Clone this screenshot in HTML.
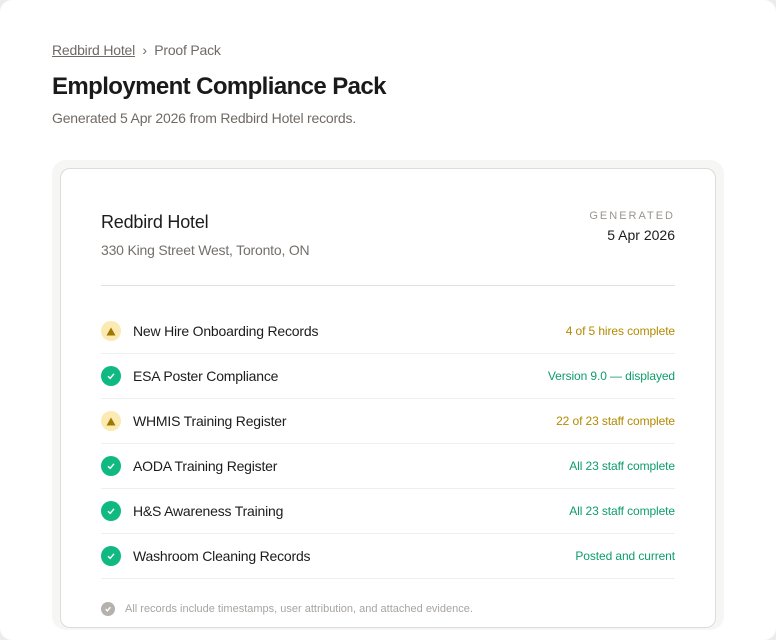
<!DOCTYPE html>
<html><head><meta charset="utf-8"><style>
*{box-sizing:border-box;margin:0;padding:0}
html,body{width:776px;height:612px;overflow:hidden;background:#ececec}
body{font-family:"Liberation Sans",sans-serif;color:#1c1c1c}
.page{position:absolute;left:0;top:0;width:776px;height:640px;background:#fff;border-radius:12px}
.crumb{position:absolute;left:52px;top:42px;font-size:14px;color:#6f6a66;letter-spacing:-0.2px}
.crumb u{color:#6f6a66;text-decoration:underline}
h1{position:absolute;left:52px;top:73px;font-size:24px;font-weight:600;letter-spacing:-0.6px;color:#1a1a1a}
.sub{position:absolute;left:52px;top:110px;font-size:14px;color:#6f6a66;letter-spacing:-0.2px}
.wrap{position:absolute;left:52px;top:160px;width:672px;height:470px;background:#f6f6f5;border-radius:14px}
.card{position:absolute;left:60px;top:168px;width:656px;height:460px;background:#fff;border:1px solid #dcdcda;border-radius:10px}
.name{position:absolute;left:40px;top:43px;font-size:18px;font-weight:500;letter-spacing:-0.2px}
.addr{position:absolute;left:40px;top:73px;font-size:14px;color:#746f6b;letter-spacing:-0.2px}
.gl{position:absolute;right:40px;top:41px;font-size:11px;letter-spacing:2px;color:#9a9591;text-align:right}
.gd{position:absolute;right:40px;top:58px;font-size:14px;text-align:right}
.hr{position:absolute;left:40px;right:40px;top:116px;border-top:1px solid #e2e2e0}
.row{position:absolute;left:40px;right:40px;height:45px;border-bottom:1px solid #efefed;display:flex;align-items:center}
.ic{width:20px;height:20px;border-radius:50%;display:flex;align-items:center;justify-content:center;margin-right:12px}
.ok{background:#10b981}.wn{background:#fbeab2}
.lab{font-size:14px;flex:1;letter-spacing:-0.2px}
.st{font-size:12px;letter-spacing:-0.1px}
.g{color:#0d9e6a}.y{color:#b38a00}
.foot{position:absolute;left:40px;top:433px;font-size:11px;color:#a8a4a0;display:flex;align-items:center}
</style></head><body>
<div class="page">
<div class="crumb"><u>Redbird Hotel</u> &nbsp;›&nbsp; Proof Pack</div>
<h1>Employment Compliance Pack</h1>
<div class="sub">Generated 5 Apr 2026 from Redbird Hotel records.</div>
<div class="wrap"></div>
<div class="card">
<div class="name">Redbird Hotel</div>
<div class="addr">330 King Street West, Toronto, ON</div>
<div class="gl">GENERATED</div>
<div class="gd">5 Apr 2026</div>
<div class="hr"></div>
<div class="row" style="top:140px"><div class="ic wn"><svg width="10" height="9" viewBox="0 0 10 9"><path d="M5 0.5L9.5 8.5H0.5Z" fill="#a07800"/></svg></div><div class="lab">New Hire Onboarding Records</div><div class="st y">4 of 5 hires complete</div></div>
<div class="row" style="top:185px"><div class="ic ok"><svg width="10" height="10" viewBox="0 0 10 10"><path d="M2 5.2L4.2 7.3L8 2.8" stroke="#fff" stroke-width="1.4" fill="none"/></svg></div><div class="lab">ESA Poster Compliance</div><div class="st g">Version 9.0 — displayed</div></div>
<div class="row" style="top:230px"><div class="ic wn"><svg width="10" height="9" viewBox="0 0 10 9"><path d="M5 0.5L9.5 8.5H0.5Z" fill="#a07800"/></svg></div><div class="lab">WHMIS Training Register</div><div class="st y">22 of 23 staff complete</div></div>
<div class="row" style="top:275px"><div class="ic ok"><svg width="10" height="10" viewBox="0 0 10 10"><path d="M2 5.2L4.2 7.3L8 2.8" stroke="#fff" stroke-width="1.4" fill="none"/></svg></div><div class="lab">AODA Training Register</div><div class="st g">All 23 staff complete</div></div>
<div class="row" style="top:320px"><div class="ic ok"><svg width="10" height="10" viewBox="0 0 10 10"><path d="M2 5.2L4.2 7.3L8 2.8" stroke="#fff" stroke-width="1.4" fill="none"/></svg></div><div class="lab">H&amp;S Awareness Training</div><div class="st g">All 23 staff complete</div></div>
<div class="row" style="top:365px"><div class="ic ok"><svg width="10" height="10" viewBox="0 0 10 10"><path d="M2 5.2L4.2 7.3L8 2.8" stroke="#fff" stroke-width="1.4" fill="none"/></svg></div><div class="lab">Washroom Cleaning Records</div><div class="st g">Posted and current</div></div>
<div class="foot"><div class="ic" style="background:#b5b2ae;width:14px;height:14px;margin-right:10px"><svg width="8" height="8" viewBox="0 0 10 10"><path d="M2 5.2L4.2 7.3L8 2.8" stroke="#fff" stroke-width="1.8" fill="none"/></svg></div>All records include timestamps, user attribution, and attached evidence.</div>
</div>
</div>
</body></html>
